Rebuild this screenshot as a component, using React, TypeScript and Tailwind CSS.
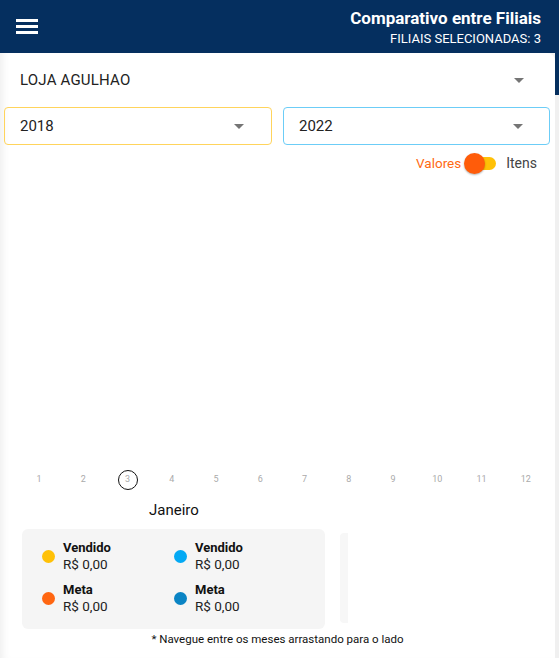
import React from "react";

const Caret: React.FC = () => (
  <svg width="10" height="5" viewBox="0 0 10 5" className="shrink-0">
    <path d="M0 0 L10 0 L5 5 Z" fill="#757575" />
  </svg>
);

const LegendItem: React.FC<{ color: string; label: string; value: string }> = ({ color, label, value }) => (
  <div className="flex items-center gap-[8px]">
    <span className="w-[13px] h-[13px] rounded-full shrink-0" style={{ backgroundColor: color }} />
    <div className="flex flex-col leading-[17px]">
      <span className="text-[13px] font-bold text-[#111]">{label}</span>
      <span className="text-[13.5px] text-[#222]">{value}</span>
    </div>
  </div>
);

const months = [1, 2, 3, 4, 5, 6, 7, 8, 9, 10, 11, 12];

export default function App() {
  return (
    <div className="w-[559px] h-[658px] overflow-hidden bg-[#f2f2f2] flex flex-col" style={{ fontFamily: "Roboto, 'Noto Sans', sans-serif" }}>
      {/* header */}
      <div className="h-[53px] bg-[#052f5f] flex items-start justify-between pl-[16px] pr-[18px] shrink-0">
        <div className="mt-[19px] flex flex-col gap-[3px]">
          <span className="block w-[22px] h-[3px] bg-white" />
          <span className="block w-[22px] h-[3px] bg-white" />
          <span className="block w-[22px] h-[3px] bg-white" />
        </div>
        <div className="flex flex-col items-end text-white mt-[8px]">
          <span className="text-[17px] font-bold leading-[21px]">Comparativo entre Filiais</span>
          <span className="text-[13px] leading-[18px] mt-[1px]">FILIAIS SELECIONADAS: 3</span>
        </div>
      </div>

      <div className="flex flex-1">
        {/* main card */}
        <div className="w-[555px] bg-white rounded-tr-[8px] flex flex-col relative" style={{ boxShadow: "inset 8px 0 8px -6px rgba(0,0,0,0.08)" }}>
          <div className="h-[54px] flex items-center justify-between pl-[20px] pr-[31px]">
            <span className="text-[15px] text-[#222] tracking-[0.2px]">LOJA AGULHAO</span>
            <Caret />
          </div>

          <div className="flex gap-[11px] pl-[4px] pr-[5px]">
            <div className="flex-1 h-[38px] border border-[#ffd45c] rounded-[4px] flex items-center justify-between pl-[15px] pr-[27px]">
              <span className="text-[15px] text-[#222]">2018</span>
              <Caret />
            </div>
            <div className="flex-1 h-[38px] border border-[#6ccdf7] rounded-[4px] flex items-center justify-between pl-[15px] pr-[26px]">
              <span className="text-[15px] text-[#222]">2022</span>
              <Caret />
            </div>
          </div>

          <div className="flex items-center justify-end pr-[18px] mt-[6px] h-[24px]">
            <span className="text-[13.5px] text-[#ff6a13]">Valores</span>
            <div className="relative w-[32px] h-[20px] ml-[3px] mr-[10px] flex items-center">
              <span className="absolute left-[8px] w-[24px] h-[13px] rounded-full bg-[#ffc107]" />
              <span className="absolute left-0 w-[21px] h-[21px] rounded-full bg-[#ff5c0a] shadow-[0_1px_2px_rgba(0,0,0,0.3)]" />
            </div>
            <span className="text-[14px] text-[#444]">Itens</span>
          </div>

          {/* empty chart */}
          <div className="h-[294px]" />

          <div className="grid grid-cols-12 ml-[17px] w-[531px] h-[22px] items-center">
            {months.map((m) => (
              <div key={m} className="flex justify-center">
                {m === 3 ? (
                  <span className="w-[20px] h-[20px] rounded-full border border-[#111] flex items-center justify-center text-[9px] text-[#aaa]">
                    {m}
                  </span>
                ) : (
                  <span className="text-[9px] text-[#aaa]">{m}</span>
                )}
              </div>
            ))}
          </div>

          <div className="pl-[149px] mt-[10px] text-[15px] text-[#111] leading-[18px]">Janeiro</div>

          <div className="flex items-start mt-[10px] pl-[22px]">
            <div className="w-[303px] h-[100px] bg-[#f5f5f5] rounded-[6px] grid grid-cols-[132px_1fr] content-start gap-y-[8px] pl-[20px] pt-[10px]">
              <LegendItem color="#ffc107" label="Vendido" value="R$ 0,00" />
              <LegendItem color="#03a9f4" label="Vendido" value="R$ 0,00" />
              <LegendItem color="#ff6611" label="Meta" value="R$ 0,00" />
              <LegendItem color="#0a84c4" label="Meta" value="R$ 0,00" />
            </div>
            <div className="w-[8px] h-[90px] mt-[4px] ml-[15px] bg-[#f7f7f7] rounded-l-[4px]" />
          </div>

          <div className="text-center text-[11.5px] text-[#111] mt-[2px]">* Navegue entre os meses arrastando para o lado</div>
        </div>

        {/* next card edge */}
        <div className="flex-1 flex flex-col">
          <div className="h-[42px] bg-[#052f5f]" />
          <div className="flex-1 bg-[#f0f0f0]" />
        </div>
      </div>
    </div>
  );
}
